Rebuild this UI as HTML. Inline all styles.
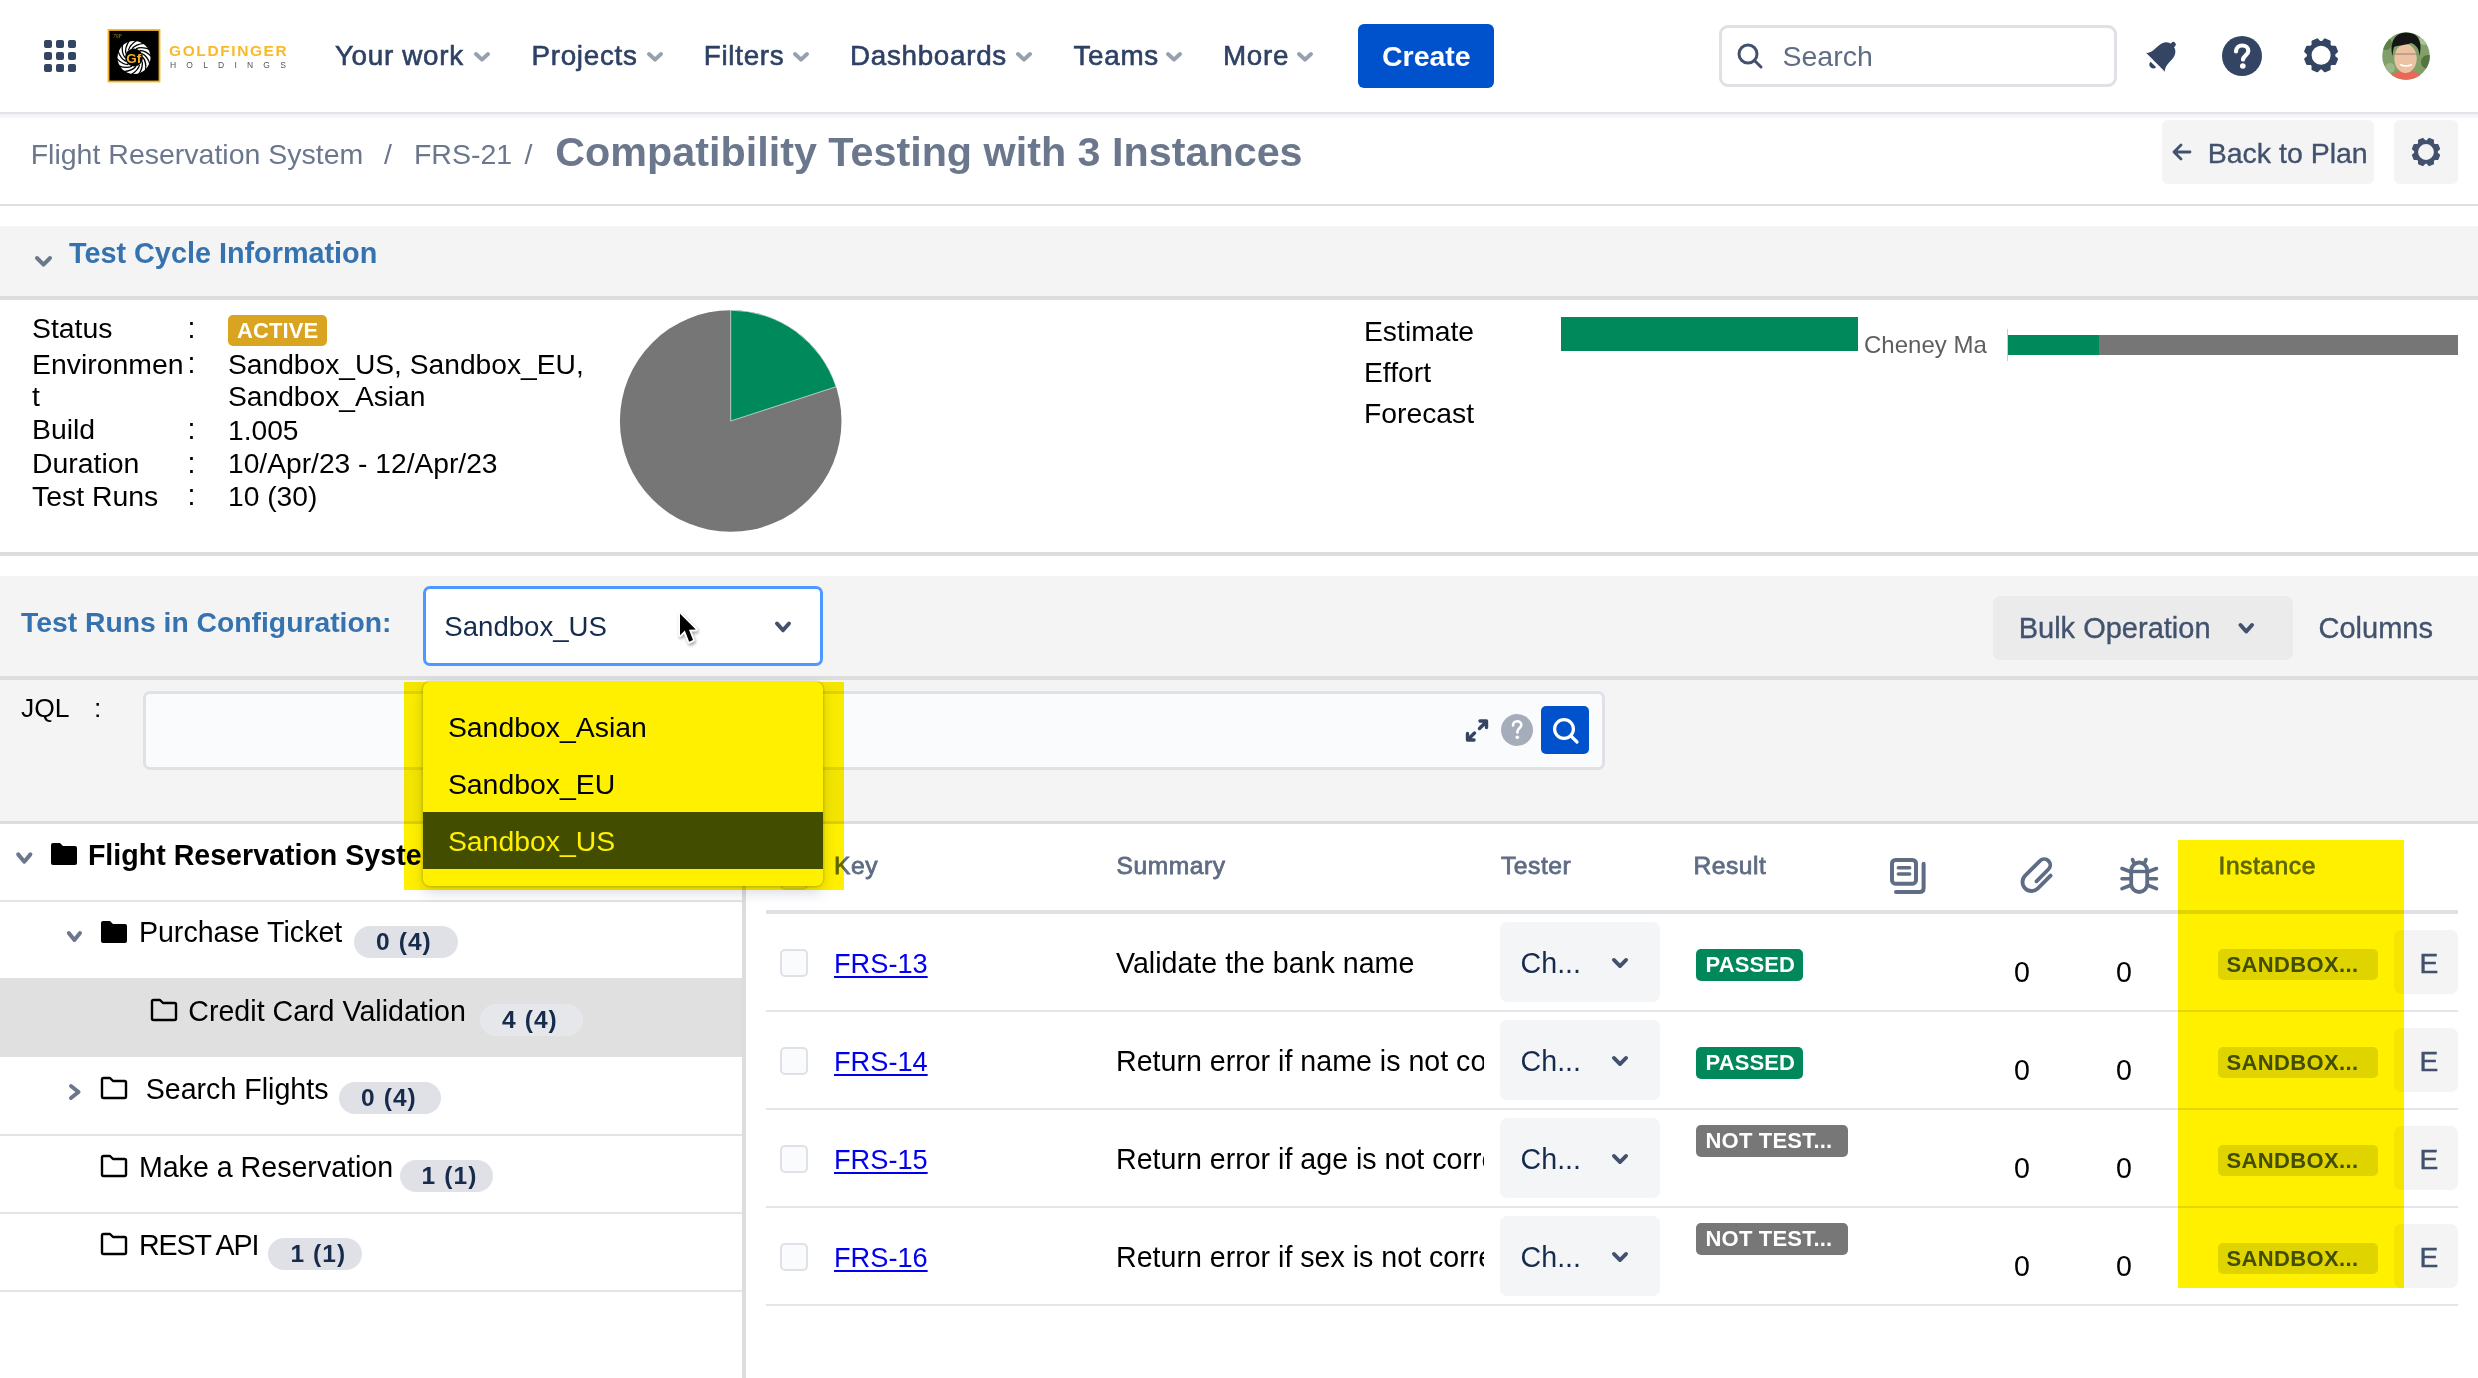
<!DOCTYPE html>
<html><head><meta charset="utf-8"><title>Compatibility Testing with 3 Instances</title>
<style>
html,body{margin:0;padding:0;}
body{width:2478px;height:1378px;position:relative;overflow:hidden;background:#fff;font-family:"Liberation Sans",sans-serif;}
.t{position:absolute;line-height:1;white-space:nowrap;}
.r{position:absolute;}
svg.r{overflow:visible;}
</style></head><body>
<div class="r" style="left:44px;top:40px;width:8px;height:8px;background:#344563;border-radius:2px;"></div>
<div class="r" style="left:56px;top:40px;width:8px;height:8px;background:#344563;border-radius:2px;"></div>
<div class="r" style="left:68px;top:40px;width:8px;height:8px;background:#344563;border-radius:2px;"></div>
<div class="r" style="left:44px;top:52px;width:8px;height:8px;background:#344563;border-radius:2px;"></div>
<div class="r" style="left:56px;top:52px;width:8px;height:8px;background:#344563;border-radius:2px;"></div>
<div class="r" style="left:68px;top:52px;width:8px;height:8px;background:#344563;border-radius:2px;"></div>
<div class="r" style="left:44px;top:64px;width:8px;height:8px;background:#344563;border-radius:2px;"></div>
<div class="r" style="left:56px;top:64px;width:8px;height:8px;background:#344563;border-radius:2px;"></div>
<div class="r" style="left:68px;top:64px;width:8px;height:8px;background:#344563;border-radius:2px;"></div>
<svg class="r" style="left:0;top:0" width="1" height="1">
<rect x="108.5" y="30" width="51" height="51.5" fill="#000" stroke="#F5B21E" stroke-width="1.8"/>
<text x="113" y="37.5" font-size="5.5" fill="#B8860B" font-family="Liberation Serif" font-style="italic">79F</text>
<circle cx="134" cy="57.5" r="16.5" fill="#fff"/>
<path d="M143.00 57.50 Q146.68 62.13 145.55 70.65" stroke="#000" stroke-width="1.3" fill="none"/><path d="M142.11 61.40 Q143.42 67.17 138.70 74.36" stroke="#000" stroke-width="1.3" fill="none"/><path d="M139.61 64.54 Q138.29 70.30 130.92 74.73" stroke="#000" stroke-width="1.3" fill="none"/><path d="M136.00 66.27 Q132.31 70.89 123.75 71.69" stroke="#000" stroke-width="1.3" fill="none"/><path d="M132.00 66.27 Q126.67 68.83 118.61 65.83" stroke="#000" stroke-width="1.3" fill="none"/><path d="M128.39 64.54 Q122.47 64.53 116.52 58.33" stroke="#000" stroke-width="1.3" fill="none"/><path d="M125.89 61.40 Q120.57 58.83 117.89 50.67" stroke="#000" stroke-width="1.3" fill="none"/><path d="M125.00 57.50 Q121.32 52.87 122.45 44.35" stroke="#000" stroke-width="1.3" fill="none"/><path d="M125.89 53.60 Q124.58 47.83 129.30 40.64" stroke="#000" stroke-width="1.3" fill="none"/><path d="M128.39 50.46 Q129.71 44.70 137.08 40.27" stroke="#000" stroke-width="1.3" fill="none"/><path d="M132.00 48.73 Q135.69 44.11 144.25 43.31" stroke="#000" stroke-width="1.3" fill="none"/><path d="M136.00 48.73 Q141.33 46.17 149.39 49.17" stroke="#000" stroke-width="1.3" fill="none"/><path d="M139.61 50.46 Q145.53 50.47 151.48 56.67" stroke="#000" stroke-width="1.3" fill="none"/><path d="M142.11 53.60 Q147.43 56.17 150.11 64.33" stroke="#000" stroke-width="1.3" fill="none"/>
<circle cx="134" cy="57.5" r="9" fill="#000"/>
<text x="133.8" y="62.5" font-size="13.5" font-weight="700" fill="#F5B21E" text-anchor="middle" font-family="Liberation Sans">Gf</text>
</svg>
<div class="t " style="left:169px;top:43.38px;font-size:15.5px;color:#FBB829;font-weight:700;letter-spacing:1.6px;">GOLDFINGER</div>
<div class="t " style="left:170px;top:60.80px;font-size:8.5px;color:#555;letter-spacing:10.2px;">HOLDINGS</div>
<div class="t " style="left:334.9px;top:42.47px;font-size:27.8px;color:#2E4165;letter-spacing:0.7px;-webkit-text-stroke:0.6px #2E4165;">Your work</div>
<svg class="r" style="left:0;top:0" width="1" height="1"><path d="M476.00 54.00 L482.00 59.60 L488.00 54.00" fill="none" stroke="#97A0AF" stroke-width="4" stroke-linecap="round" stroke-linejoin="round"/></svg>
<div class="t " style="left:531.5px;top:42.47px;font-size:27.8px;color:#2E4165;letter-spacing:0.7px;-webkit-text-stroke:0.6px #2E4165;">Projects</div>
<svg class="r" style="left:0;top:0" width="1" height="1"><path d="M649.00 54.00 L655.00 59.60 L661.00 54.00" fill="none" stroke="#97A0AF" stroke-width="4" stroke-linecap="round" stroke-linejoin="round"/></svg>
<div class="t " style="left:703.8px;top:42.47px;font-size:27.8px;color:#2E4165;letter-spacing:0.7px;-webkit-text-stroke:0.6px #2E4165;">Filters</div>
<svg class="r" style="left:0;top:0" width="1" height="1"><path d="M795.00 54.00 L801.00 59.60 L807.00 54.00" fill="none" stroke="#97A0AF" stroke-width="4" stroke-linecap="round" stroke-linejoin="round"/></svg>
<div class="t " style="left:850px;top:42.47px;font-size:27.8px;color:#2E4165;letter-spacing:0.7px;-webkit-text-stroke:0.6px #2E4165;">Dashboards</div>
<svg class="r" style="left:0;top:0" width="1" height="1"><path d="M1018.00 54.00 L1024.00 59.60 L1030.00 54.00" fill="none" stroke="#97A0AF" stroke-width="4" stroke-linecap="round" stroke-linejoin="round"/></svg>
<div class="t " style="left:1073.5px;top:42.47px;font-size:27.8px;color:#2E4165;letter-spacing:0.7px;-webkit-text-stroke:0.6px #2E4165;">Teams</div>
<svg class="r" style="left:0;top:0" width="1" height="1"><path d="M1168.00 54.00 L1174.00 59.60 L1180.00 54.00" fill="none" stroke="#97A0AF" stroke-width="4" stroke-linecap="round" stroke-linejoin="round"/></svg>
<div class="t " style="left:1223px;top:42.47px;font-size:27.8px;color:#2E4165;letter-spacing:0.7px;-webkit-text-stroke:0.6px #2E4165;">More</div>
<svg class="r" style="left:0;top:0" width="1" height="1"><path d="M1299.00 54.00 L1305.00 59.60 L1311.00 54.00" fill="none" stroke="#97A0AF" stroke-width="4" stroke-linecap="round" stroke-linejoin="round"/></svg>
<div class="r" style="left:1358px;top:24px;width:136px;height:64px;background:#0052CC;border-radius:6px;"></div>
<div class="t " style="left:1382px;top:41.87px;font-size:28.5px;color:#fff;font-weight:700;">Create</div>
<div class="r" style="left:1719px;top:25px;width:398px;height:62px;background:#fff;border:3px solid #DFE1E6;border-radius:9px;box-sizing:border-box;"></div>
<svg class="r" style="left:1736px;top:41px" width="30" height="30" viewBox="0 0 30 30"><circle cx="12" cy="13" r="9" fill="none" stroke="#42526E" stroke-width="3"/><path d="M18.5 19.5 L25 26" stroke="#42526E" stroke-width="3" stroke-linecap="round"/></svg>
<div class="t " style="left:1782.5px;top:41.87px;font-size:28.5px;color:#5E6C84;">Search</div>
<svg class="r" style="left:0;top:0" width="1" height="1"><g transform="translate(2155.5 62.3) rotate(45)" fill="#344563"><path d="M-13.4 0 C-10 -2.5 -9.8 -7 -9.6 -13 C-9.3 -20.5 -5.5 -24.2 0 -24.2 C5.5 -24.2 9.3 -20.5 9.6 -13 C9.8 -7 10 -2.5 13.4 0 Z"/><circle cx="0" cy="-25.2" r="2.5"/><path d="M-3.9 3 A3.9 3.9 0 0 0 3.9 3 Z"/></g></svg>
<svg class="r" style="left:2222px;top:36px" width="40" height="40" viewBox="0 0 40 40"><circle cx="20" cy="20" r="20" fill="#344563"/><path d="M14 15.5 C14 11.5 17 9.5 20.2 9.5 C23.8 9.5 26.3 11.8 26.3 15 C26.3 18.8 21.5 19.5 21 23.5" fill="none" stroke="#fff" stroke-width="4.2" stroke-linecap="round"/><circle cx="20.8" cy="30" r="2.8" fill="#fff"/></svg>
<svg class="r" style="left:0;top:0" width="1" height="1"><path d="M2322.37,42.16 L2324.91,39.45 L2329.62,41.40 L2329.50,45.11 L2331.29,46.90 L2335.00,46.78 L2336.95,51.49 L2334.24,54.03 L2334.24,56.57 L2336.95,59.11 L2335.00,63.82 L2331.29,63.70 L2329.50,65.49 L2329.62,69.20 L2324.91,71.15 L2322.37,68.44 L2319.83,68.44 L2317.29,71.15 L2312.58,69.20 L2312.70,65.49 L2310.91,63.70 L2307.20,63.82 L2305.25,59.11 L2307.96,56.57 L2307.96,54.03 L2305.25,51.49 L2307.20,46.78 L2310.91,46.90 L2312.70,45.11 L2312.58,41.40 L2317.29,39.45 L2319.83,42.16 Z M2331.70 55.3 A10.60 10.60 0 1 0 2310.50 55.3 A10.60 10.60 0 1 0 2331.70 55.3 Z" fill="#344563" fill-rule="evenodd" stroke="#344563" stroke-width="2.20" stroke-linejoin="round"/></svg>
<svg class="r" style="left:0;top:0" width="1" height="1">
<defs><clipPath id="av"><circle cx="2406" cy="56" r="23.8"/></clipPath></defs>
<g clip-path="url(#av)"><rect x="2380" y="30" width="52" height="52" fill="#7FA069"/>
<circle cx="2386" cy="44" r="6" fill="#5E8049"/><circle cx="2428" cy="62" r="7" fill="#55743F"/><circle cx="2390" cy="68" r="5" fill="#9DB886"/><circle cx="2424" cy="40" r="5" fill="#A8C294"/>
<path d="M2388 82 C2390 73 2397 71 2406 71 C2415 71 2422 73 2424 82 Z" fill="#E8685A"/>
<ellipse cx="2405.5" cy="58.5" rx="11.2" ry="14.5" fill="#EDC2A2"/>
<path d="M2392.5 56 C2389 41 2396 32.5 2406 32.5 C2418 32.5 2423 41 2419.5 56 C2419 49 2417 45 2411 43 C2404 46 2397 45 2394 47 C2393 50 2392.8 53 2392.5 56 Z" fill="#151515"/>
<path d="M2394 54 H2418" stroke="#8a7a70" stroke-width="0.9"/>
<path d="M2400 64.5 Q2406 67.5 2412 64.5" fill="none" stroke="#fff" stroke-width="1.6"/>
</g></svg>
<div class="r" style="left:0px;top:112px;width:2478px;height:2px;background:#E2E4E8;"></div>
<div class="r" style="left:0px;top:114px;width:2478px;height:6px;background:linear-gradient(#EFF0F2,#fff);"></div>
<div class="t " style="left:30.7px;top:140.47px;font-size:28.5px;color:#6B778C;">Flight Reservation System</div>
<div class="t " style="left:384px;top:140.47px;font-size:28.5px;color:#6B778C;">/</div>
<div class="t " style="left:413.9px;top:140.47px;font-size:28.5px;color:#6B778C;">FRS-21</div>
<div class="t " style="left:524.6px;top:140.47px;font-size:28.5px;color:#6B778C;">/</div>
<div class="t " style="left:555.3px;top:132.24px;font-size:41.3px;color:#6B778C;font-weight:700;">Compatibility Testing with 3 Instances</div>
<div class="r" style="left:2162px;top:120px;width:212px;height:64px;background:#F4F4F4;border-radius:6px;"></div>
<svg class="r" style="left:2170px;top:140px" width="24" height="24" viewBox="0 0 24 24"><path d="M20 12 H4 M11 5 L4 12 L11 19" fill="none" stroke="#42526E" stroke-width="2.8" stroke-linecap="round" stroke-linejoin="round"/></svg>
<div class="t " style="left:2207.7px;top:138.87px;font-size:28.5px;color:#42526E;-webkit-text-stroke:0.35px #42526E;">Back to Plan</div>
<div class="r" style="left:2394px;top:120px;width:64px;height:64px;background:#F4F4F4;border-radius:6px;"></div>
<svg class="r" style="left:2410px;top:136px" width="32" height="32" viewBox="0 0 32 32"><path d="M17.05,5.05 L19.17,2.79 L23.10,4.42 L23.00,7.51 L24.49,9.00 L27.58,8.90 L29.21,12.83 L26.95,14.95 L26.95,17.05 L29.21,19.17 L27.58,23.10 L24.49,23.00 L23.00,24.49 L23.10,27.58 L19.17,29.21 L17.05,26.95 L14.95,26.95 L12.83,29.21 L8.90,27.58 L9.00,24.49 L7.51,23.00 L4.42,23.10 L2.79,19.17 L5.05,17.05 L5.05,14.95 L2.79,12.83 L4.42,8.90 L7.51,9.00 L9.00,7.51 L8.90,4.42 L12.83,2.79 L14.95,5.05 Z M24.83 16 A8.83 8.83 0 1 0 7.17 16 A8.83 8.83 0 1 0 24.83 16 Z" fill="#42526E" fill-rule="evenodd" stroke="#42526E" stroke-width="1.83" stroke-linejoin="round"/></svg>
<div class="r" style="left:0px;top:204px;width:2478px;height:2px;background:#DFDFDF;"></div>
<div class="r" style="left:0px;top:226px;width:2478px;height:70px;background:#F4F4F4;"></div>
<div class="r" style="left:0px;top:296px;width:2478px;height:4px;background:#DDDDDD;"></div>
<svg class="r" style="left:0;top:0" width="1" height="1"><path d="M37.00 258.00 L43.50 264.60 L50.00 258.00" fill="none" stroke="#6B778C" stroke-width="4" stroke-linecap="round" stroke-linejoin="round"/></svg>
<div class="t " style="left:69px;top:239.12px;font-size:28.8px;color:#3572B0;font-weight:700;">Test Cycle Information</div>
<div class="t " style="left:32.0px;top:313.86px;font-size:28.4px;color:#000;">Status</div>
<div class="t " style="left:187.5px;top:313.69px;font-size:28.6px;color:#000;">:</div>
<div class="t " style="left:32.0px;top:349.66px;font-size:28.4px;color:#000;">Environmen</div>
<div class="t " style="left:187.5px;top:349.49px;font-size:28.6px;color:#000;">:</div>
<div class="t " style="left:32.0px;top:382.16px;font-size:28.4px;color:#000;">t</div>
<div class="t " style="left:32.0px;top:415.46px;font-size:28.4px;color:#000;">Build</div>
<div class="t " style="left:187.5px;top:415.29px;font-size:28.6px;color:#000;">:</div>
<div class="t " style="left:32.0px;top:448.86px;font-size:28.4px;color:#000;">Duration</div>
<div class="t " style="left:187.5px;top:448.69px;font-size:28.6px;color:#000;">:</div>
<div class="t " style="left:32.0px;top:481.56px;font-size:28.4px;color:#000;">Test Runs</div>
<div class="t " style="left:187.5px;top:481.39px;font-size:28.6px;color:#000;">:</div>
<div class="r" style="left:228px;top:314.5px;width:99px;height:31.0px;background:#D9A521;border-radius:5px;"></div>
<div class="t " style="left:237px;top:320.38px;font-size:22px;color:#fff;font-weight:700;letter-spacing:0.1px;">ACTIVE</div>
<div class="t " style="left:228.0px;top:349.83px;font-size:28.2px;color:#000;">Sandbox_US, Sandbox_EU,</div>
<div class="t " style="left:228.0px;top:382.33px;font-size:28.2px;color:#000;">Sandbox_Asian</div>
<div class="t " style="left:228.0px;top:415.63px;font-size:28.2px;color:#000;">1.005</div>
<div class="t " style="left:228.0px;top:449.03px;font-size:28.2px;color:#000;">10/Apr/23 - 12/Apr/23</div>
<div class="t " style="left:228.0px;top:481.73px;font-size:28.2px;color:#000;">10 (30)</div>
<svg class="r" style="left:0;top:0" width="900" height="560" viewBox="0 0 900 560"><circle cx="730.7" cy="421.0" r="110.8" fill="#767676"/><path d="M730.7 421.0 L730.7 310.2 A110.8 110.8 0 0 1 836.08 386.76 Z" fill="#008A5C" stroke="#fff" stroke-width="0.6"/></svg>
<div class="t " style="left:1364px;top:317.24px;font-size:28.3px;color:#000;">Estimate</div>
<div class="t " style="left:1364px;top:358.34px;font-size:28.3px;color:#000;">Effort</div>
<div class="t " style="left:1364px;top:398.94px;font-size:28.3px;color:#000;">Forecast</div>
<div class="r" style="left:1561px;top:317px;width:297px;height:34px;background:#008A5C;"></div>
<div class="t " style="left:1864px;top:333.18px;font-size:24px;color:#5E5E5E;">Cheney Ma</div>
<div class="r" style="left:2007px;top:329px;width:1px;height:32px;background:#CCCCCC;"></div>
<div class="r" style="left:2008px;top:335px;width:91px;height:20px;background:#008A5C;"></div>
<div class="r" style="left:2099px;top:335px;width:359px;height:20px;background:#767676;"></div>
<div class="r" style="left:0px;top:552.3px;width:2478px;height:3.5px;background:#DDDDDD;"></div>
<div class="r" style="left:0px;top:576px;width:2478px;height:100px;background:#F4F4F4;"></div>
<div class="r" style="left:0px;top:676px;width:2478px;height:4px;background:#DDDDDD;"></div>
<div class="t " style="left:21px;top:608.34px;font-size:28.3px;color:#3572B0;font-weight:700;">Test Runs in Configuration:</div>
<div class="r" style="left:423px;top:586px;width:400px;height:79.5px;background:#fff;border:3.5px solid #4C9AFF;border-radius:7px;box-sizing:border-box;"></div>
<div class="t " style="left:444.3px;top:612.64px;font-size:27.6px;color:#172B4D;">Sandbox_US</div>
<svg class="r" style="left:0;top:0" width="1" height="1"><path d="M777.00 623.50 L783.00 630.30 L789.00 623.50" fill="none" stroke="#42526E" stroke-width="4" stroke-linecap="round" stroke-linejoin="round"/></svg>
<div class="r" style="left:1993px;top:596px;width:300px;height:64px;background:#EBEBEB;border-radius:7px;"></div>
<div class="t " style="left:2018.7px;top:613.95px;font-size:29.0px;color:#42526E;-webkit-text-stroke:0.35px #42526E;">Bulk Operation</div>
<svg class="r" style="left:0;top:0" width="1" height="1"><path d="M2240.50 625.00 L2246.25 631.50 L2252.00 625.00" fill="none" stroke="#42526E" stroke-width="4" stroke-linecap="round" stroke-linejoin="round"/></svg>
<div class="t " style="left:2318.5px;top:613.95px;font-size:29.0px;color:#42526E;-webkit-text-stroke:0.35px #42526E;">Columns</div>
<div class="r" style="left:0px;top:680px;width:2478px;height:141px;background:#F4F4F4;"></div>
<div class="r" style="left:0px;top:821px;width:2478px;height:3px;background:#DDDDDD;"></div>
<div class="t " style="left:21px;top:694.57px;font-size:26.5px;color:#000;">JQL</div>
<div class="t " style="left:94px;top:694.57px;font-size:26.5px;color:#000;">:</div>
<div class="r" style="left:143px;top:691px;width:1462px;height:79px;background:#FAFBFC;border:3px solid #DFE1E6;border-radius:7px;box-sizing:border-box;"></div>
<svg class="r" style="left:0;top:0" width="1" height="1"><g fill="none" stroke="#344563" stroke-width="3.4" stroke-linecap="round" stroke-linejoin="round"><path d="M1480 721 H1486.5 V727.5 M1479.5 728.5 L1485.5 722.5"/><path d="M1467.5 733.5 V740 H1474 M1468.5 739 L1474.5 733"/></g><circle cx="1517" cy="730" r="16" fill="#A5ADBA"/><path d="M1513 725.5 C1513 723 1514.8 721.2 1517.2 721.2 C1519.6 721.2 1521.3 722.9 1521.3 725 C1521.3 728 1517.6 728.5 1517.4 731.5 V732.5" fill="none" stroke="#fff" stroke-width="2.6" stroke-linecap="round"/><circle cx="1517.3" cy="737.2" r="1.8" fill="#fff"/></svg>
<div class="r" style="left:1541px;top:706px;width:48px;height:48px;background:#0052CC;border-radius:5px;"></div>
<svg class="r" style="left:1541px;top:706px" width="48" height="48" viewBox="0 0 48 48"><circle cx="23" cy="23" r="9.4" fill="none" stroke="#fff" stroke-width="3.2"/><path d="M30 30 L36 36" stroke="#fff" stroke-width="3.2" stroke-linecap="round"/></svg>
<div class="r" style="left:742px;top:824px;width:4px;height:554px;background:#DDDDDD;"></div>
<div class="r" style="left:0px;top:978px;width:742px;height:79px;background:#E0E0E0;"></div>
<div class="r" style="left:0px;top:900px;width:742px;height:2px;background:#E4E4E4;"></div>
<div class="r" style="left:0px;top:1134px;width:742px;height:2px;background:#E4E4E4;"></div>
<div class="r" style="left:0px;top:1212px;width:742px;height:2px;background:#E4E4E4;"></div>
<div class="r" style="left:0px;top:1290px;width:742px;height:2px;background:#E4E4E4;"></div>
<svg class="r" style="left:0;top:0" width="1" height="1"><path d="M18.20 854.40 L24.30 861.70 L30.40 854.40" fill="none" stroke="#6B778C" stroke-width="4" stroke-linecap="round" stroke-linejoin="round"/></svg>
<svg class="r" style="left:50px;top:842px" width="28" height="24" viewBox="0 0 28 24"><path d="M1 3 Q1 1 3 1 H10 L13 4 H25 Q27 4 27 6 V21 Q27 23 25 23 H3 Q1 23 1 21 Z" fill="#000"/></svg>
<div class="t " style="left:87.9px;top:841.09px;font-size:28.6px;color:#000;font-weight:700;">Flight Reservation Syste</div>
<svg class="r" style="left:0;top:0" width="1" height="1"><path d="M68.80 933.00 L74.40 940.00 L80.00 933.00" fill="none" stroke="#6B778C" stroke-width="4" stroke-linecap="round" stroke-linejoin="round"/></svg>
<svg class="r" style="left:100px;top:920px" width="28" height="24" viewBox="0 0 28 24"><path d="M1 3 Q1 1 3 1 H10 L13 4 H25 Q27 4 27 6 V21 Q27 23 25 23 H3 Q1 23 1 21 Z" fill="#000"/></svg>
<div class="t " style="left:138.9px;top:918.49px;font-size:28.6px;color:#000;">Purchase Ticket</div>
<div class="r" style="left:354px;top:926px;width:103.5px;height:31.5px;background:#DFE1E6;border-radius:16px;"></div>
<div class="t " style="left:376px;top:929.96px;font-size:24.5px;color:#172B4D;font-weight:700;letter-spacing:1.1px;">0 (4)</div>
<svg class="r" style="left:150px;top:998px" width="28" height="24" viewBox="0 0 28 24"><path d="M2 3.5 Q2 2 3.5 2 H10 L13 5 H24.5 Q26 5 26 6.5 V20.5 Q26 22 24.5 22 H3.5 Q2 22 2 20.5 Z" fill="none" stroke="#000" stroke-width="2.4" stroke-linejoin="round"/></svg>
<div class="t " style="left:188.3px;top:996.79px;font-size:28.6px;color:#000;">Credit Card Validation</div>
<div class="r" style="left:480px;top:1004px;width:103px;height:31.5px;background:#E6E7EA;border-radius:16px;"></div>
<div class="t " style="left:502px;top:1007.96px;font-size:24.5px;color:#172B4D;font-weight:700;letter-spacing:1.1px;">4 (4)</div>
<svg class="r" style="left:0;top:0" width="1" height="1"><path d="M71 1086 L78.5 1092 L71 1098" fill="none" stroke="#6B778C" stroke-width="4" stroke-linecap="round" stroke-linejoin="round"/></svg>
<svg class="r" style="left:100px;top:1076px" width="28" height="24" viewBox="0 0 28 24"><path d="M2 3.5 Q2 2 3.5 2 H10 L13 5 H24.5 Q26 5 26 6.5 V20.5 Q26 22 24.5 22 H3.5 Q2 22 2 20.5 Z" fill="none" stroke="#000" stroke-width="2.4" stroke-linejoin="round"/></svg>
<div class="t " style="left:145.7px;top:1074.79px;font-size:28.6px;color:#000;">Search Flights</div>
<div class="r" style="left:339px;top:1082px;width:102px;height:31.5px;background:#DFE1E6;border-radius:16px;"></div>
<div class="t " style="left:361px;top:1085.96px;font-size:24.5px;color:#172B4D;font-weight:700;letter-spacing:1.1px;">0 (4)</div>
<svg class="r" style="left:100px;top:1154px" width="28" height="24" viewBox="0 0 28 24"><path d="M2 3.5 Q2 2 3.5 2 H10 L13 5 H24.5 Q26 5 26 6.5 V20.5 Q26 22 24.5 22 H3.5 Q2 22 2 20.5 Z" fill="none" stroke="#000" stroke-width="2.4" stroke-linejoin="round"/></svg>
<div class="t " style="left:138.9px;top:1152.79px;font-size:28.6px;color:#000;">Make a Reservation</div>
<div class="r" style="left:399.6px;top:1160px;width:93.39999999999998px;height:31.5px;background:#DFE1E6;border-radius:16px;"></div>
<div class="t " style="left:421.6px;top:1163.96px;font-size:24.5px;color:#172B4D;font-weight:700;letter-spacing:1.1px;">1 (1)</div>
<svg class="r" style="left:100px;top:1232px" width="28" height="24" viewBox="0 0 28 24"><path d="M2 3.5 Q2 2 3.5 2 H10 L13 5 H24.5 Q26 5 26 6.5 V20.5 Q26 22 24.5 22 H3.5 Q2 22 2 20.5 Z" fill="none" stroke="#000" stroke-width="2.4" stroke-linejoin="round"/></svg>
<div class="t " style="left:138.9px;top:1230.79px;font-size:28.6px;color:#000;letter-spacing:-1.1px;">REST API</div>
<div class="r" style="left:268.4px;top:1238px;width:93.90000000000003px;height:31.5px;background:#DFE1E6;border-radius:16px;"></div>
<div class="t " style="left:290.4px;top:1241.96px;font-size:24.5px;color:#172B4D;font-weight:700;letter-spacing:1.1px;">1 (1)</div>
<div class="r" style="left:780px;top:862px;width:28px;height:28px;background:#FAFBFC;border:2.5px solid #DFE1E6;border-radius:5px;box-sizing:border-box;"></div>
<div class="t " style="left:834px;top:854.18px;font-size:24.6px;color:#5E6C84;letter-spacing:0.55px;-webkit-text-stroke:0.8px #5E6C84;">Key</div>
<div class="t " style="left:1116.5px;top:854.18px;font-size:24.6px;color:#5E6C84;letter-spacing:0.55px;-webkit-text-stroke:0.8px #5E6C84;">Summary</div>
<div class="t " style="left:1501px;top:854.18px;font-size:24.6px;color:#5E6C84;letter-spacing:0.55px;-webkit-text-stroke:0.8px #5E6C84;">Tester</div>
<div class="t " style="left:1693.4px;top:854.18px;font-size:24.6px;color:#5E6C84;letter-spacing:0.55px;-webkit-text-stroke:0.8px #5E6C84;">Result</div>
<div class="t " style="left:2218.5px;top:854.18px;font-size:24.6px;color:#5E6C84;letter-spacing:0.55px;-webkit-text-stroke:0.8px #5E6C84;">Instance</div>
<svg class="r" style="left:0;top:0" width="1" height="1"><rect x="1892" y="860" width="24" height="23.7" rx="3.5" fill="none" stroke="#5E6C84" stroke-width="4"/><path d="M1898.4 867.8 H1909.6 M1898.4 874 H1909.6" stroke="#5E6C84" stroke-width="3.6" stroke-linecap="round"/><path d="M1923.6 863.7 V888 Q1923.6 892 1919.6 892 H1896" fill="none" stroke="#5E6C84" stroke-width="4" stroke-linecap="round"/></svg>
<svg class="r" style="left:0;top:0" width="1" height="1"><g transform="translate(2031.5 882) rotate(45)"><path d="M9 -18 V0 A9 9 0 0 1 -9 0 V-21 A6 6 0 0 1 3 -21 V-4" fill="none" stroke="#5E6C84" stroke-width="3.8" stroke-linecap="round" stroke-linejoin="round"/></g></svg>
<svg class="r" style="left:0;top:0" width="1" height="1"><rect x="2131.2" y="862.5" width="16" height="29.5" rx="8" fill="none" stroke="#5E6C84" stroke-width="3.8"/><path d="M2131.5 871.5 H2147" stroke="#5E6C84" stroke-width="3.4"/><path d="M2133.5 862 L2132.5 859.5 M2145 862 L2146 859.5 M2130 871.5 L2122 868.5 M2130 878.7 H2122 M2130 885.5 L2122 888.6 M2148.5 871.5 L2156.5 868.5 M2148.5 878.7 H2156.5 M2148.5 885.5 L2156.5 888.6" stroke="#5E6C84" stroke-width="3.6" stroke-linecap="round"/></svg>
<div class="r" style="left:766px;top:910px;width:1692px;height:4px;background:#DFE1E6;"></div>
<div class="r" style="left:766px;top:1010px;width:1692px;height:2px;background:#E4E5E8;"></div>
<div class="r" style="left:780px;top:949px;width:28px;height:28px;background:#FAFBFC;border:2.5px solid #DFE1E6;border-radius:5px;box-sizing:border-box;"></div>
<div class="t " style="left:834px;top:950.48px;font-size:27.2px;color:#0000EE;text-decoration:underline;text-decoration-thickness:2px;text-underline-offset:3px;">FRS-13</div>
<div class="r" style="left:1116px;top:940px;width:368px;height:45px;overflow:hidden">
<div class="t " style="left:0px;top:8.79px;font-size:28.6px;color:#000;">Validate the bank name</div>
</div>
<div class="r" style="left:1500px;top:922px;width:160px;height:79.5px;background:#F4F5F7;border-radius:7px;"></div>
<div class="t " style="left:1520.6px;top:948.79px;font-size:28.6px;color:#172B4D;">Ch...</div>
<svg class="r" style="left:0;top:0" width="1" height="1"><path d="M1613.90 959.90 L1620.00 966.10 L1626.10 959.90" fill="none" stroke="#42526E" stroke-width="3.8" stroke-linecap="round" stroke-linejoin="round"/></svg>
<div class="r" style="left:1696px;top:949px;width:107px;height:32px;background:#00875A;border-radius:5px;"></div>
<div class="t " style="left:1705.5px;top:954.38px;font-size:22px;color:#fff;font-weight:700;letter-spacing:0.1px;">PASSED</div>
<div class="t " style="left:2014px;top:957.79px;font-size:28.6px;color:#000;">0</div>
<div class="t " style="left:2116px;top:957.79px;font-size:28.6px;color:#000;">0</div>
<div class="r" style="left:2218px;top:949px;width:160px;height:31px;background:#DFE1E6;border-radius:5px;"></div>
<div class="t " style="left:2226.5px;top:954.38px;font-size:22px;color:#42526E;font-weight:700;letter-spacing:0.35px;">SANDBOX...</div>
<div class="r" style="left:2394px;top:930px;width:64px;height:64px;background:#F4F4F4;border-radius:7px;"></div>
<div class="t " style="left:2419.5px;top:948.63px;font-size:28.2px;color:#42526E;-webkit-text-stroke:0.4px #42526E;">E</div>
<div class="r" style="left:766px;top:1108px;width:1692px;height:2px;background:#E4E5E8;"></div>
<div class="r" style="left:780px;top:1047px;width:28px;height:28px;background:#FAFBFC;border:2.5px solid #DFE1E6;border-radius:5px;box-sizing:border-box;"></div>
<div class="t " style="left:834px;top:1048.48px;font-size:27.2px;color:#0000EE;text-decoration:underline;text-decoration-thickness:2px;text-underline-offset:3px;">FRS-14</div>
<div class="r" style="left:1116px;top:1038px;width:368px;height:45px;overflow:hidden">
<div class="t " style="left:0px;top:8.79px;font-size:28.6px;color:#000;">Return error if name is not correct</div>
</div>
<div class="r" style="left:1500px;top:1020px;width:160px;height:79.5px;background:#F4F5F7;border-radius:7px;"></div>
<div class="t " style="left:1520.6px;top:1046.79px;font-size:28.6px;color:#172B4D;">Ch...</div>
<svg class="r" style="left:0;top:0" width="1" height="1"><path d="M1613.90 1057.90 L1620.00 1064.10 L1626.10 1057.90" fill="none" stroke="#42526E" stroke-width="3.8" stroke-linecap="round" stroke-linejoin="round"/></svg>
<div class="r" style="left:1696px;top:1047px;width:107px;height:32px;background:#00875A;border-radius:5px;"></div>
<div class="t " style="left:1705.5px;top:1052.38px;font-size:22px;color:#fff;font-weight:700;letter-spacing:0.1px;">PASSED</div>
<div class="t " style="left:2014px;top:1055.79px;font-size:28.6px;color:#000;">0</div>
<div class="t " style="left:2116px;top:1055.79px;font-size:28.6px;color:#000;">0</div>
<div class="r" style="left:2218px;top:1047px;width:160px;height:31px;background:#DFE1E6;border-radius:5px;"></div>
<div class="t " style="left:2226.5px;top:1052.38px;font-size:22px;color:#42526E;font-weight:700;letter-spacing:0.35px;">SANDBOX...</div>
<div class="r" style="left:2394px;top:1028px;width:64px;height:64px;background:#F4F4F4;border-radius:7px;"></div>
<div class="t " style="left:2419.5px;top:1046.63px;font-size:28.2px;color:#42526E;-webkit-text-stroke:0.4px #42526E;">E</div>
<div class="r" style="left:766px;top:1206px;width:1692px;height:2px;background:#E4E5E8;"></div>
<div class="r" style="left:780px;top:1145px;width:28px;height:28px;background:#FAFBFC;border:2.5px solid #DFE1E6;border-radius:5px;box-sizing:border-box;"></div>
<div class="t " style="left:834px;top:1146.48px;font-size:27.2px;color:#0000EE;text-decoration:underline;text-decoration-thickness:2px;text-underline-offset:3px;">FRS-15</div>
<div class="r" style="left:1116px;top:1136px;width:368px;height:45px;overflow:hidden">
<div class="t " style="left:0px;top:8.79px;font-size:28.6px;color:#000;">Return error if age is not correct</div>
</div>
<div class="r" style="left:1500px;top:1118px;width:160px;height:79.5px;background:#F4F5F7;border-radius:7px;"></div>
<div class="t " style="left:1520.6px;top:1144.79px;font-size:28.6px;color:#172B4D;">Ch...</div>
<svg class="r" style="left:0;top:0" width="1" height="1"><path d="M1613.90 1155.90 L1620.00 1162.10 L1626.10 1155.90" fill="none" stroke="#42526E" stroke-width="3.8" stroke-linecap="round" stroke-linejoin="round"/></svg>
<div class="r" style="left:1696px;top:1125px;width:152px;height:32px;background:#777777;border-radius:5px;"></div>
<div class="t " style="left:1705.5px;top:1130.38px;font-size:22px;color:#fff;font-weight:700;letter-spacing:0.2px;">NOT TEST...</div>
<div class="t " style="left:2014px;top:1153.79px;font-size:28.6px;color:#000;">0</div>
<div class="t " style="left:2116px;top:1153.79px;font-size:28.6px;color:#000;">0</div>
<div class="r" style="left:2218px;top:1145px;width:160px;height:31px;background:#DFE1E6;border-radius:5px;"></div>
<div class="t " style="left:2226.5px;top:1150.38px;font-size:22px;color:#42526E;font-weight:700;letter-spacing:0.35px;">SANDBOX...</div>
<div class="r" style="left:2394px;top:1126px;width:64px;height:64px;background:#F4F4F4;border-radius:7px;"></div>
<div class="t " style="left:2419.5px;top:1144.63px;font-size:28.2px;color:#42526E;-webkit-text-stroke:0.4px #42526E;">E</div>
<div class="r" style="left:766px;top:1304px;width:1692px;height:2px;background:#E4E5E8;"></div>
<div class="r" style="left:780px;top:1243px;width:28px;height:28px;background:#FAFBFC;border:2.5px solid #DFE1E6;border-radius:5px;box-sizing:border-box;"></div>
<div class="t " style="left:834px;top:1244.48px;font-size:27.2px;color:#0000EE;text-decoration:underline;text-decoration-thickness:2px;text-underline-offset:3px;">FRS-16</div>
<div class="r" style="left:1116px;top:1234px;width:368px;height:45px;overflow:hidden">
<div class="t " style="left:0px;top:8.79px;font-size:28.6px;color:#000;">Return error if sex is not correct</div>
</div>
<div class="r" style="left:1500px;top:1216px;width:160px;height:79.5px;background:#F4F5F7;border-radius:7px;"></div>
<div class="t " style="left:1520.6px;top:1242.79px;font-size:28.6px;color:#172B4D;">Ch...</div>
<svg class="r" style="left:0;top:0" width="1" height="1"><path d="M1613.90 1253.90 L1620.00 1260.10 L1626.10 1253.90" fill="none" stroke="#42526E" stroke-width="3.8" stroke-linecap="round" stroke-linejoin="round"/></svg>
<div class="r" style="left:1696px;top:1223px;width:152px;height:32px;background:#777777;border-radius:5px;"></div>
<div class="t " style="left:1705.5px;top:1228.38px;font-size:22px;color:#fff;font-weight:700;letter-spacing:0.2px;">NOT TEST...</div>
<div class="t " style="left:2014px;top:1251.79px;font-size:28.6px;color:#000;">0</div>
<div class="t " style="left:2116px;top:1251.79px;font-size:28.6px;color:#000;">0</div>
<div class="r" style="left:2218px;top:1243px;width:160px;height:31px;background:#DFE1E6;border-radius:5px;"></div>
<div class="t " style="left:2226.5px;top:1248.38px;font-size:22px;color:#42526E;font-weight:700;letter-spacing:0.35px;">SANDBOX...</div>
<div class="r" style="left:2394px;top:1224px;width:64px;height:64px;background:#F4F4F4;border-radius:7px;"></div>
<div class="t " style="left:2419.5px;top:1242.63px;font-size:28.2px;color:#42526E;-webkit-text-stroke:0.4px #42526E;">E</div>
<div class="r" style="left:423px;top:682px;width:400px;height:204px;background:#fff;border-radius:7px;box-shadow:0 0 0 1.5px rgba(9,30,66,0.10),0 6px 14px rgba(9,30,66,0.18);"></div>
<div class="t " style="left:447.9px;top:712.96px;font-size:28.4px;color:#000;">Sandbox_Asian</div>
<div class="t " style="left:447.9px;top:769.96px;font-size:28.4px;color:#000;">Sandbox_EU</div>
<div class="r" style="left:423px;top:812px;width:400px;height:57px;background:#42526E;"></div>
<div class="t " style="left:447.9px;top:826.56px;font-size:28.4px;color:#fff;">Sandbox_US</div>
<svg class="r" style="left:0;top:0;filter:drop-shadow(1px 2px 1.5px rgba(0,0,0,0.35))" width="1" height="1"><path d="M680 613.8 L680 635.2 L684.8 630.6 L689.2 641.8 L693 640 L689 629.8 L695.8 629.6 Z" fill="#000" stroke="#fff" stroke-width="3.6" stroke-linejoin="round" paint-order="stroke"/></svg>
<div class="r" style="left:404px;top:682px;width:440px;height:208px;background:#FFF000;mix-blend-mode:multiply;"></div>
<div class="r" style="left:2178px;top:840px;width:226px;height:448px;background:#FFF000;mix-blend-mode:multiply;"></div>
</body></html>
